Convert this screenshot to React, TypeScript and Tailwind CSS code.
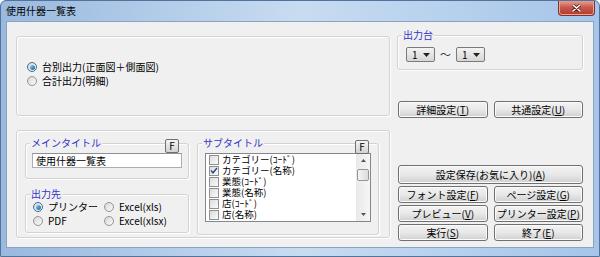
import React from 'react';

const FONT = "font-['Noto_Sans_CJK_JP','Liberation_Sans',sans-serif]";

type Kids = { children?: React.ReactNode };

const Radio = ({ checked = false, children }: Kids & { checked?: boolean }) => (
  <div className="flex items-center gap-[5px] h-[14px] whitespace-nowrap">
    <span
      className={`flex items-center justify-center w-[10px] h-[10px] rounded-full border ${
        checked ? 'border-[#3b6f98]' : 'border-[#959595]'
      } bg-linear-to-br from-[#d6d6d6] to-[#fbfbfb]`}
    >
      {checked && (
        <span className="w-[5px] h-[5px] rounded-full bg-linear-to-br from-[#8ad6f7] to-[#1a5a92]" />
      )}
    </span>
    <span className="leading-[14px]">{children}</span>
  </div>
);

const Btn = ({ children, className = '' }: Kids & { className?: string }) => (
  <button
    className={`h-[17px] rounded-[3px] border border-[#707070] bg-linear-to-b from-[#f3f3f3] via-[#e8e8e8] to-[#d0d0d0] shadow-[inset_0_0_0_1px_#fbfbfb] text-[10px] leading-none text-black ${className}`}
  >
    {children}
  </button>
);

const FBtn = ({ className = '' }: { className?: string }) => (
  <span
    className={`absolute flex items-center justify-center w-[14px] h-[14px] rounded-[2px] border border-[#707070] bg-linear-to-b from-[#f4f4f4] to-[#d2d2d2] text-[10px] leading-none ${className}`}
  >
    F
  </span>
);

// etched group frame with caption sitting on the top edge
const Group = ({
  label,
  className = '',
  children,
}: Kids & { label?: string; className?: string }) => (
  <div
    className={`relative border border-[#d3d3d3] rounded-[3px] shadow-[1px_1px_0_#ffffff,inset_1px_1px_0_#ffffff] ${className}`}
  >
    {label && (
      <span className="absolute -top-[7px] left-[4px] px-[1px] bg-[#f0f0f0] leading-[12px] text-[#3434c8]">
        {label}
      </span>
    )}
    {children}
  </div>
);

const Combo = () => (
  <div className="flex items-center justify-between w-[29px] h-[15px] rounded-[2px] border border-[#7a7a7a] bg-linear-to-b from-[#f3f3f3] to-[#d6d6d6] pl-[5px] pr-[4px] leading-none">
    <span>1</span>
    <svg width="7" height="4" viewBox="0 0 7 4">
      <path d="M0 0h7L3.5 4z" fill="#222" />
    </svg>
  </div>
);

const listItems: [string, boolean][] = [
  ['カテゴリー(ｺｰﾄﾞ)', false],
  ['カテゴリー(名称)', true],
  ['業態(ｺｰﾄﾞ)', false],
  ['業態(名称)', false],
  ['店(ｺｰﾄﾞ)', false],
  ['店(名称)', false],
];

export default function App() {
  return (
    <div
      className={`w-[600px] h-[257px] flex flex-col overflow-hidden rounded-t-[6px] border border-[#52749c] bg-linear-to-r from-[#9ab9df] via-[#c8dcf1] to-[#a6c5e9] text-[10px] text-black ${FONT}`}
    >
      {/* title bar */}
      <div className="h-[20px] flex items-start justify-between pl-[5px] pr-[4px]">
        <span className="mt-[3px] text-[10px] leading-[14px]">使用什器一覧表</span>
        <div className="-mt-[1px] flex items-center justify-center w-[37px] h-[16px] rounded-b-[4px] border border-t-0 border-[#7d3430] bg-linear-to-b from-[#e6a89c] via-[#c9584b] to-[#b2392c] shadow-[inset_0_0_0_1px_#e9a69c]">
          <svg width="9" height="8" viewBox="0 0 9 8">
            <path d="M1 1l7 6M8 1L1 7" stroke="#5a1e1a" strokeWidth="3" strokeLinecap="round" />
            <path d="M1 1l7 6M8 1L1 7" stroke="#ffffff" strokeWidth="1.6" strokeLinecap="round" />
          </svg>
        </div>
      </div>

      {/* client area */}
      <div className="flex-1 mx-[5px] mb-[8px] border border-[#8aa3c2] bg-[#f0f0f0] flex pl-[9px]">
        {/* left column */}
        <div className="w-[374px] flex flex-col pt-[14px]">
          <Group className="h-[80px] flex flex-col pt-[23px] pl-[10px]">
            <Radio checked>台別出力(正面図＋側面図)</Radio>
            <Radio>合計出力(明細)</Radio>
          </Group>

          <Group className="mt-[14px] h-[108px] flex pt-[12px] pl-[8px]">
            <div className="w-[164px] flex flex-col">
              <Group label="メインタイトル" className="h-[36px]">
                <FBtn className="-top-[5px] right-[9px]" />
                <div className="mt-[9px] ml-[6px] w-[150px] h-[15px] border border-[#abadb3] border-t-[#8e9196] bg-white pl-[3px] leading-[13px]">
                  使用什器一覧表
                </div>
              </Group>
              <Group label="出力先" className="mt-[15px] h-[39px] pt-[5px] pl-[7px]">
                <div className="grid grid-cols-[71px_1fr]">
                  <Radio checked>プリンター</Radio>
                  <Radio>Excel(xls)</Radio>
                  <Radio>PDF</Radio>
                  <Radio>Excel(xlsx)</Radio>
                </div>
              </Group>
            </div>

            <Group label="サブタイトル" className="ml-[8px] w-[182px] h-[92px]">
              <FBtn className="-top-[4px] right-[9px]" />
              <div className="mt-[9px] ml-[7px] w-[166px] h-[69px] border border-[#828790] bg-white flex overflow-hidden">
                <div className="flex-1 flex flex-col pl-[3px]">
                  {listItems.map(([label, checked]) => (
                    <div key={label} className="flex items-center gap-[3px] h-[11px] whitespace-nowrap">
                      <span className="flex items-center justify-center w-[10px] h-[10px] border border-[#8f8f8f] bg-linear-to-br from-[#dcdcdc] to-[#fbfbfb]">
                        {checked && (
                          <svg width="8" height="7" viewBox="0 0 8 7">
                            <path d="M1 3.5l2 2.3L7 1" stroke="#2a4a8a" strokeWidth="1.4" fill="none" />
                          </svg>
                        )}
                      </span>
                      <span className="text-[9.5px] leading-[11px]">{label}</span>
                    </div>
                  ))}
                </div>
                <div className="w-[14px] flex flex-col items-center bg-linear-to-r from-[#e9e9e9] to-[#f6f6f6]">
                  <div className="h-[13px] flex items-center justify-center">
                    <svg width="5" height="3" viewBox="0 0 5 3">
                      <path d="M0 3h5L2.5 0z" fill="#555" />
                    </svg>
                  </div>
                  <div className="mt-[2px] w-[12px] h-[12px] rounded-[2px] border border-[#979797] bg-linear-to-r from-[#f4f4f4] to-[#dcdcdc]" />
                  <div className="mt-auto h-[13px] flex items-center justify-center">
                    <svg width="5" height="3" viewBox="0 0 5 3">
                      <path d="M0 0h5L2.5 3z" fill="#555" />
                    </svg>
                  </div>
                </div>
              </div>
            </Group>
          </Group>
        </div>

        {/* right column */}
        <div className="ml-[7px] w-[186px] flex flex-col pt-[13px]">
          <Group label="出力台" className="h-[35px] flex items-start gap-[5px] pt-[11px] pl-[8px]">
            <Combo />
            <span className="leading-[15px] text-[11px] text-[#333]">～</span>
            <Combo />
          </Group>

          <div className="mt-[31px] pl-[1px] grid grid-cols-2 gap-[6px]">
            <Btn>
              詳細設定(<u>T</u>)
            </Btn>
            <Btn>
              共通設定(<u>U</u>)
            </Btn>
          </div>

          <div className="mt-[47px] pl-[1px] flex flex-col gap-[2px]">
            <Btn className="h-[19px]">
              設定保存(お気に入り)(<u>A</u>)
            </Btn>
            <div className="grid grid-cols-2 gap-x-[6px] gap-y-[2px]">
              <Btn>
                フォント設定(<u>F</u>)
              </Btn>
              <Btn>
                ページ設定(<u>G</u>)
              </Btn>
              <Btn>
                プレビュー(<u>V</u>)
              </Btn>
              <Btn>
                プリンター設定(<u>P</u>)
              </Btn>
              <Btn>
                実行(<u>S</u>)
              </Btn>
              <Btn>
                終了(<u>E</u>)
              </Btn>
            </div>
          </div>
        </div>
      </div>
    </div>
  );
}
